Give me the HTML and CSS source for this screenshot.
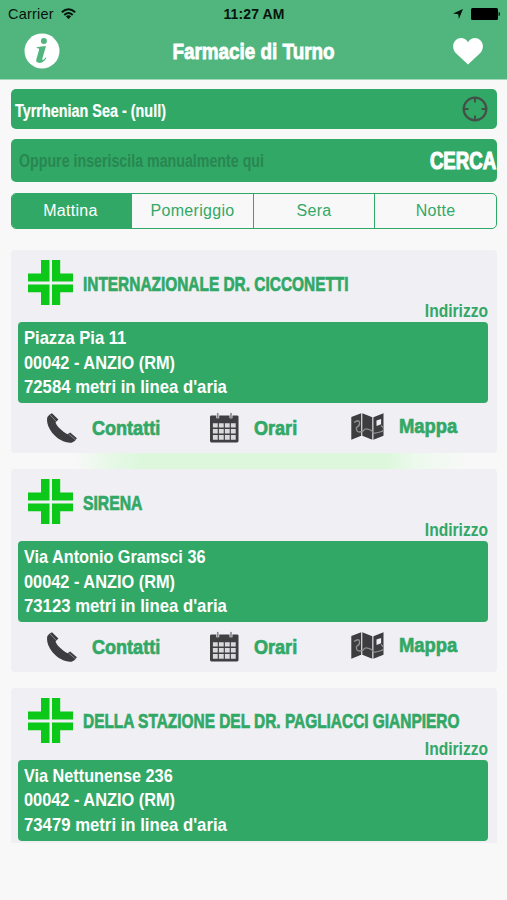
FILE: index.html
```html
<!DOCTYPE html>
<html lang="it">
<head>
<meta charset="utf-8">
<title>Farmacie di Turno</title>
<link rel="stylesheet" href="styles.css">
</head>
<body>
<svg class="defs" width="0" height="0" aria-hidden="true">
  <symbol id="cross" viewBox="0 0 45 45"><path fill="#0bc819" d="M13 0h8.500v21.500h-21.500v-8h13zM24 0h8.200v13.500h12.800v8h-21zM0 24.500h21.500v20.500h-8.500v-12.800h-13zM24 24.500h21v7.700h-12.800v12.800h-8.200z"/></symbol>
  <symbol id="phone" viewBox="0 0 30 30"><path fill="#3d3d3f" d="M.4 4Q2 1.200 5 .2L11.400 6.500 8.600 9.200Q8.800 11.500 12.800 15.600T20.400 21.200L23.200 19.400 29.900 25.200Q28 28.700 24.700 29.700C18.500 30.400 10.500 26.300 5.300 20 .8 14.300-.8 8.500.4 4Z"/><path stroke="#b5b5b9" stroke-width=".6" d="M3.200 2l6.200 6.600M21.600 21l7 6"/></symbol>
  <symbol id="calendar" viewBox="0 0 30 31"><path fill="#404042" d="M1.500 3H28q1.500 0 1.500 1.500v25q0 1.500-1.500 1.500H1.500Q0 31 0 29.500v-25Q0 3 1.500 3z"/><path fill="#d9d9dc" d="M3 11h5v4.500H3zM9.200 11h5v4.500h-5zM15.400 11h5v4.500h-5zM21.600 11h5v4.500h-5zM3 17h5v4.800H3zM9.200 17h5v4.800h-5zM15.400 17h5v4.800h-5zM21.600 17h5v4.800h-5zM3 23.300h5v4.800H3zM9.200 23.300h5v4.800h-5zM15.400 23.300h5v4.800h-5zM21.600 23.300h5v4.800h-5z"/><path stroke="#efeff4" stroke-width="3" d="M8 1v5M21.700 1v5"/><path stroke="#88888b" stroke-width="1.700" stroke-linecap="round" d="M8 1v4.500M21.700 1v4.500"/></symbol>
  <symbol id="map" viewBox="0 0 33 27"><path fill="#3d3d3f" d="M.3 4L10.200.2v22.600L.3 26.800zM11.300.2l10 4v22.600l-10-4zM22.400 4.200L32.500.2v22.600l-10.100 4z"/><path fill="none" stroke="#929295" stroke-width="1.300" d="M3 9.500q5-3.500 5.500 0T5.500 14.500q-.5 4.500 3 4.500t4.500-2 5-.5 4 3 7-.5 1-6.500"/><path fill="#efeff4" d="M25.500 7.600l4.600-1.700v5.300l-4.600 1.700z"/></symbol>
</svg>
<div class="screen">
  <header class="header">
    <div class="status">
      <div class="carrier"><span class="carrier-name">Carrier</span>
        <svg class="wifi" width="15" height="12" viewBox="0 0 15 12" fill="none" stroke="#07140c" stroke-width="2"><path d="M.8 4.300Q7.500-1.700 14.200 4.300M3.300 6.900Q7.500 3.200 11.700 6.900"/><path fill="#07140c" stroke="none" d="M4.900 8.300Q7.500 6.300 10.100 8.300L7.500 11.300z"/></svg>
      </div>
      <div class="time">11:27 AM</div>
      <div class="indicators">
        <svg width="10" height="10" viewBox="0 0 10 10"><path fill="#07140c" d="M10 0L5.900 10 5.200 5.200 0 4.600z"/></svg>
        <svg width="29" height="12" viewBox="0 0 29 12"><rect width="27" height="12" rx="1.500"/><path d="M27.600 4q1.400 0 1.400 2t-1.400 2z"/></svg>
      </div>
    </div>
    <div class="nav">
      <svg width="36" height="36" viewBox="0 0 36 36"><circle cx="18" cy="18" r="17.500" fill="#fff"/><g fill="#50b67e"><circle cx="19.900" cy="8.100" r="3"/><path d="M12.700 14.300q4.300-.7 9.300-1.300l-3.600 12.600q-.4 1.500.4 1.500 1 0 2.600-2.500l.9.500q-2.500 4.800-6.500 4.800-4.400 0-3.500-3.300l2.700-9.600q.4-1.600-.9-1.700l-1.400-.2z"/></g></svg>
      <h1 class="title">Farmacie di Turno</h1>
      <svg width="30" height="27" viewBox="0 0 30 27"><path fill="#fff" d="M15 26.500L3 15.300C-1 11.200-.6 5 2.700 2.200 6.600-1.200 12-.4 15 4.200 18-.4 23.400-1.200 27.300 2.200 30.600 5 31 11.200 27 15.300z"/></svg>
    </div>
  </header>
  <main class="content">
    <div class="field location"><span class="place">Tyrrhenian Sea - (null)</span>
      <svg width="26" height="26" viewBox="0 0 26 26" fill="none" stroke="#435048"><circle cx="13" cy="13" r="11.300" stroke-width="2.300"/><path stroke-width="2" d="M13 2v4.500M13 19.500V24M2 13h4.500M19.500 13H24"/></svg>
    </div>
    <div class="field search"><span class="placeholder">Oppure inseriscila manualmente qui</span><span class="cerca">CERCA</span></div>
    <div class="tabs"><span class="tab active">Mattina</span><span class="tab">Pomeriggio</span><span class="tab">Sera</span><span class="tab">Notte</span></div>
    <div class="list">
      <section class="card">
        <div class="card-head"><svg class="cross"><use href="#cross"/></svg><h2 class="name">INTERNAZIONALE DR. CICCONETTI</h2></div>
        <div class="label">Indirizzo</div>
        <div class="address"><p class="street wide">Piazza Pia 11</p><p class="city">00042 - ANZIO (RM)</p><p class="distance">72584 metri in linea d'aria</p></div>
        <div class="actions"><svg class="phone"><use href="#phone"/></svg><span class="action contatti">Contatti</span><svg class="calendar"><use href="#calendar"/></svg><span class="action orari">Orari</span><svg class="map"><use href="#map"/></svg><span class="action mappa">Mappa</span></div>
      </section>
      <div class="glow"></div>
      <section class="card">
        <div class="card-head"><svg class="cross"><use href="#cross"/></svg><h2 class="name short">SIRENA</h2></div>
        <div class="label">Indirizzo</div>
        <div class="address"><p class="street">Via Antonio Gramsci 36</p><p class="city">00042 - ANZIO (RM)</p><p class="distance">73123 metri in linea d'aria</p></div>
        <div class="actions"><svg class="phone"><use href="#phone"/></svg><span class="action contatti">Contatti</span><svg class="calendar"><use href="#calendar"/></svg><span class="action orari">Orari</span><svg class="map"><use href="#map"/></svg><span class="action mappa">Mappa</span></div>
      </section>
      <div class="gap"></div>
      <section class="card clipped">
        <div class="card-head"><svg class="cross"><use href="#cross"/></svg><h2 class="name">DELLA STAZIONE DEL DR. PAGLIACCI GIANPIERO</h2></div>
        <div class="label">Indirizzo</div>
        <div class="address"><p class="street">Via Nettunense 236</p><p class="city">00042 - ANZIO (RM)</p><p class="distance">73479 metri in linea d'aria</p></div>
      </section>
    </div>
  </main>
</div>
</body>
</html>
```
FILE: styles.css
```css
* { box-sizing: border-box; }
body { margin: 0; background: #f8f8f8; font-family: "Liberation Sans", sans-serif; font-weight: bold; color: #32a866; }
svg { display: block; flex: none; }
.defs { position: absolute; }
.screen { width: 507px; height: 900px; overflow: hidden; }
.header { height: 80px; background: #50b67e; border-bottom: 1px solid #a6d9bc; color: #07140c; }
.status { height: 28px; padding: 0 7px 0 8px; display: grid; grid-template-columns: 1fr auto 1fr; align-items: center; font-size: 14px; }
.carrier { display: flex; align-items: center; gap: 7px; font-weight: normal; }
.carrier-name { letter-spacing: .2px; font-size: 14.500px; }
.time { letter-spacing: .1px; }
.indicators { display: flex; justify-content: flex-end; align-items: center; gap: 8px; }
.nav { height: 46px; padding: 0 24px; display: flex; align-items: center; justify-content: space-between; }

/* Condensed lettering: the regular bold face squeezed horizontally */
.title, .place, .placeholder, .cerca, .name, .label, .address p, .action { white-space: nowrap; transform-origin: left center; }

.title { margin: 2px 5px 0 0; font-size: 22px; line-height: 26px; color: #fff; -webkit-text-stroke: .8px #fff; transform-origin: center; transform: scaleX(.857); }
.content { padding: 9px 10px 0 11px; }
.field { display: flex; align-items: center; justify-content: space-between; background: #32a866; border-radius: 5px; color: #fff; }
.location { height: 40px; padding: 0 9px 0 4px; font-size: 18px; }
.place { margin-top: 4px; transform: scaleX(.8); -webkit-text-stroke: .2px #fff; }
.search { height: 43px; margin-top: 10px; padding: 0 1px 0 8px; }
.placeholder { margin-top: 1px; font-size: 18px; color: #288650; transform: scaleX(.79); }
.cerca { font-size: 24.500px; -webkit-text-stroke: 1.200px #fff; transform-origin: right center; transform: scaleX(.76); }
.tabs { height: 36px; margin-top: 11px; display: grid; grid-template-columns: 119px 122px 121px 1fr; border: 1px solid #32a866; border-radius: 5px; overflow: hidden; font-weight: normal; font-size: 16px; letter-spacing: .3px; }
.tab { display: flex; align-items: center; justify-content: center; border-left: 1px solid #32a866; }
.tab.active { background: #32a866; color: #fff; border-left: 0; padding-right: 2px; }
.list { margin-top: 21px; }
.card { height: 203px; background: #efeff4; border-radius: 4px; padding: 10px 9px 0 7px; }
.card.clipped { height: 155px; border-radius: 4px 4px 0 0; }
.card-head { height: 45px; display: flex; align-items: center; padding-left: 10px; gap: 10px; }
.cross { width: 45px; height: 45px; }
.name { width: 300px; margin: 2px 0 0; font-size: 20px; line-height: 24px; -webkit-text-stroke: .7px #32a866; transform: scaleX(.771); }
.name.short { transform: scaleX(.785); }
.label { height: 17px; line-height: 11px; text-align: right; font-size: 19px; transform-origin: right center; transform: scaleX(.82); }
.address { height: 81px; background: #32a866; border-radius: 4px; color: #fff; padding: 4px 6px; font-size: 19px; line-height: 24.500px; }
.address p { margin: 0; }
.street { transform: scaleX(.855); }
.street.wide { transform: scaleX(.872); }
.city { transform: scaleX(.86); }
.distance { transform: scaleX(.88); }
.actions { display: flex; height: 50px; align-items: center; padding-left: 29px; font-size: 21px; }
.action { -webkit-text-stroke: .7px #32a866; transform: scaleX(.86); }
.phone { width: 30px; height: 30px; }
.calendar { width: 29px; height: 31px; margin-top: -1px; }
.map { width: 33px; height: 27px; margin-top: -4px; }
.contatti { width: 118px; margin-left: 15px; }
.orari { width: 97px; margin-left: 15px; }
.mappa { margin: -4px 0 0 15px; transform: scaleX(.875); }
.glow { height: 16px; background: linear-gradient(90deg, #f8f8f8 13%, #e8f8e8 20%, #dcf7dc 27%, #dcf7dc 77%, #ecf9ec 83%, #f8f8f8 94%); }
.gap { height: 15.500px; }
```
